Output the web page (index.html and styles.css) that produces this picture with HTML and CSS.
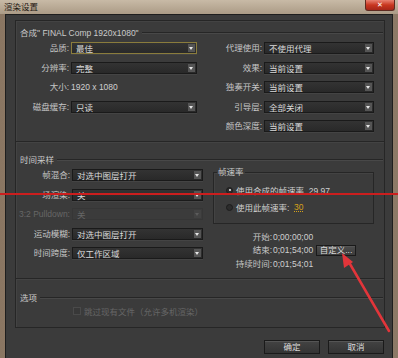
FILE: index.html
```html
<!DOCTYPE html>
<html lang="zh-CN">
<head>
  <meta charset="UTF-8" />
  <title>渲染设置</title>
  <link rel="stylesheet" href="styles.css">
</head>
<body>
  <div class="titlebar">
    <span class="title">渲染设置</span>
    <span class="close">✕</span>
  </div>

  <div class="window">
    <div class="panel">
      <!-- Composition -->
      <section class="section comp">
        <div class="legend"><span>合成" FINAL Comp 1920x1080"</span></div>
        <div class="comp-grid">
          <label>品质:</label>
          <div class="select focus"><span>最佳</span><i class="arrow"></i></div>
          <label>代理使用:</label>
          <div class="select"><span>不使用代理</span><i class="arrow"></i></div>

          <label>分辨率:</label>
          <div class="select"><span>完整</span><i class="arrow"></i></div>
          <label>效果:</label>
          <div class="select"><span>当前设置</span><i class="arrow"></i></div>

          <label>大小:</label>
          <div class="value">1920 x 1080</div>
          <label>独奏开关:</label>
          <div class="select"><span>当前设置</span><i class="arrow"></i></div>

          <label>磁盘缓存:</label>
          <div class="select"><span>只读</span><i class="arrow"></i></div>
          <label>引导层:</label>
          <div class="select"><span>全部关闭</span><i class="arrow"></i></div>

          <label class="col3">颜色深度:</label>
          <div class="select"><span>当前设置</span><i class="arrow"></i></div>
        </div>
      </section>

      <!-- Time sampling -->
      <section class="section time">
        <div class="legend"><span>时间采样</span></div>
        <div class="time-body">
          <div class="time-grid">
            <label>帧混合:</label>
            <div class="select"><span>对选中图层打开</span><i class="arrow"></i></div>
            <label>场渲染:</label>
            <div class="select"><span>关</span><i class="arrow"></i></div>
            <label class="off">3:2 Pulldown:</label>
            <div class="select disabled"><span>关</span><i class="arrow"></i></div>
            <label>运动模糊:</label>
            <div class="select"><span>对选中图层打开</span><i class="arrow"></i></div>
            <label>时间跨度:</label>
            <div class="select"><span>仅工作区域</span><i class="arrow"></i></div>
          </div>

          <div class="time-side">
            <fieldset class="rate">
              <legend>帧速率</legend>
              <div class="radio first"><i class="on"></i>使用合成的帧速率&nbsp;&nbsp;29.97</div>
              <div class="radio"><i></i>使用此帧速率:&nbsp;&nbsp;<u>30</u></div>
            </fieldset>
            <div class="time-info">
              <div class="ti-row"><label>开始:</label><span class="tc">0;00;00;00</span></div>
              <div class="ti-row"><label>结束:</label><span class="tc">0;01;54;00</span><button class="btn small">自定义...</button></div>
              <div class="ti-row"><label>持续时间:</label><span class="tc">0;01;54;01</span></div>
            </div>
          </div>
        </div>
      </section>

      <!-- Options -->
      <section class="section options">
        <div class="legend"><span>选项</span></div>
        <div class="check"><i></i>跳过现有文件（允许多机渲染）</div>
      </section>
    </div>

    <div class="footer">
      <button class="btn">确定</button>
      <button class="btn">取消</button>
    </div>
  </div>

  <!-- annotation marks drawn over the screenshot -->
  <div class="mark-line"></div>
  <svg class="mark-arrow" width="398" height="358" viewBox="0 0 398 358">
    <path d="M389 331 L350 264" stroke="#e2353a" stroke-width="2.5" stroke-linecap="round" />
    <polygon points="342,253 353,262 344,268" fill="#e2353a" />
  </svg>
</body>
</html>
```

FILE: styles.css
```css
* {
  box-sizing: border-box;
}

html, body {
  margin: 0;
  padding: 0;
}

body {
  width: 398px;
  height: 358px;
  overflow: hidden;
  position: relative;
  background: linear-gradient(90deg, #8a7662, #a18f7c 40%, #8c7966);
  font-family: "Liberation Sans Narrow", "Liberation Sans", "Noto Sans CJK SC", sans-serif;
  font-size: 8.5px;
  color: #cfcfcf;
}

/* window chrome */
.titlebar {
  height: 14px;
  display: flex;
  align-items: flex-start;
  background: linear-gradient(#c8baa6, #ab9b86);
}
.title {
  padding: 2px 0 0 4px;
  line-height: 10px;
  color: #1e1812;
}
.close {
  margin-left: auto;
  margin-right: 3px;
  width: 30px;
  height: 11px;
  background: linear-gradient(#e98272, #c8361f 50%, #a62618);
  border: 1px solid #5e2a20;
  border-top: 0;
  border-radius: 0 0 3px 3px;
  color: #fff;
  font-family: "DejaVu Sans", sans-serif;
  font-size: 7px;
  font-weight: bold;
  line-height: 10px;
  text-align: center;
}

.window {
  margin: 0 5px;
  height: 344px;
  background: #3b3b3b;
  border: 1px solid #1e1e1e;
  border-bottom: 0;
  padding: 5px 7px 0 9px;
}

/* section boxes */
.section {
  border: 1px solid #262626;
  box-shadow: inset 1px 1px 0 #434343;
}
.section + .section {
  border-top: 0;
}
.comp {
  height: 122px;
  padding-top: 7px;
}
.time {
  height: 137px;
  padding-top: 13px;
}
.options {
  height: 49px;
  padding-top: 14px;
}

.legend {
  display: flex;
  align-items: center;
  height: 10px;
  line-height: 10px;
  padding-left: 4px;
  margin-right: 1px;
  color: #cacaca;
  white-space: nowrap;
}
.legend::after {
  content: "";
  flex: 1;
  margin-left: 3px;
  border-top: 1px solid #262626;
  border-bottom: 1px solid #484848;
}

label {
  text-align: right;
  line-height: 12px;
  white-space: nowrap;
  color: #c6c6c6;
}
label.off {
  color: #676767;
}

/* dropdowns */
.select {
  display: flex;
  align-items: center;
  height: 12px;
  padding: 0 1px 0 4px;
  background: linear-gradient(#333, #292929);
  border: 1px solid #1a1a1a;
  box-shadow: 0 1px 0 #444;
  color: #dadada;
  white-space: nowrap;
}
.select.focus {
  border-color: #8a7c3c;
}
.select.disabled {
  background: #3b3b3b;
  border-color: #363636;
  box-shadow: none;
  color: #666;
}
.arrow {
  margin-left: auto;
  width: 7px;
  height: 8px;
  background: #555;
  position: relative;
}
.arrow::after {
  content: "";
  position: absolute;
  left: 1px;
  top: 3px;
  border-top: 3px solid #e6e6e6;
  border-left: 2.5px solid transparent;
  border-right: 2.5px solid transparent;
}
.disabled .arrow {
  background: #424242;
}
.disabled .arrow::after {
  border-top-color: #5c5c5c;
}

.value {
  line-height: 12px;
  color: #cfcfcf;
}

.comp-grid {
  display: grid;
  grid-template-columns: 53px 126px 63px 110px;
  grid-auto-rows: 12px;
  column-gap: 2px;
  row-gap: 7.5px;
  margin-top: 4px;
}
.col3 {
  grid-column: 3;
}

/* time sampling */
.time-body {
  display: flex;
  margin-top: 4px;
}
.time-grid {
  display: grid;
  grid-template-columns: 54px 131px;
  grid-auto-rows: 12px;
  column-gap: 2px;
  row-gap: 7.5px;
}
.time-side {
  width: 161px;
  margin-left: 10px;
}

.rate {
  margin: -2px 0 0 0;
  padding: 0;
  height: 57px;
  border: 1px solid #262626;
  box-shadow: inset 1px 1px 0 #434343;
}
.rate legend {
  margin-left: 3px;
  padding: 0 1px;
  line-height: 10px;
  color: #cacaca;
}
.radio {
  display: flex;
  align-items: center;
  height: 12px;
  margin-top: 5px;
  padding-left: 12px;
  white-space: nowrap;
}
.radio.first {
  margin-top: 7px;
}
.radio i {
  width: 7px;
  height: 7px;
  margin-right: 3px;
  border-radius: 50%;
  border: 1px solid #1c1c1c;
  background: #2c2c2c;
  position: relative;
}
.radio i.on::after {
  content: "";
  position: absolute;
  left: 1.5px;
  top: 1.5px;
  width: 2px;
  height: 2px;
  border-radius: 50%;
  background: #eee;
}
.radio u {
  color: #d6a21a;
  text-decoration-style: dotted;
}

.time-info {
  margin-top: 6px;
}
.ti-row {
  display: flex;
  align-items: center;
  height: 13.5px;
  white-space: nowrap;
}
.ti-row label {
  width: 59px;
  margin-right: 1px;
}
.tc {
  width: 34px;
}

/* buttons */
.btn {
  width: 56px;
  height: 14px;
  padding: 0;
  font: inherit;
  line-height: 12px;
  color: #dcdcdc;
  background: linear-gradient(#434343, #343434);
  border: 1px solid #1a1a1a;
  box-shadow: inset 0 1px 0 #555;
}
.btn.small {
  width: 40px;
  height: 11px;
  line-height: 9px;
  margin-left: 9px;
  background: linear-gradient(#4d4d4d, #3b3b3b);
}

/* options */
.check {
  display: flex;
  align-items: center;
  height: 10px;
  margin-top: 3px;
  padding-left: 57px;
  color: #666;
  white-space: nowrap;
}
.check i {
  width: 8px;
  height: 8px;
  margin-right: 3px;
  border: 1px solid #4a4a4a;
  background: #383838;
}

.footer {
  display: flex;
  justify-content: flex-end;
  gap: 8px;
  margin-top: 12px;
  padding-right: 1px;
}

/* red annotation marks */
.mark-line {
  position: absolute;
  left: 0;
  top: 193px;
  width: 398px;
  height: 2px;
  background: #cc1e1e;
}
.mark-arrow {
  position: absolute;
  left: 0;
  top: 0;
  pointer-events: none;
}
```
